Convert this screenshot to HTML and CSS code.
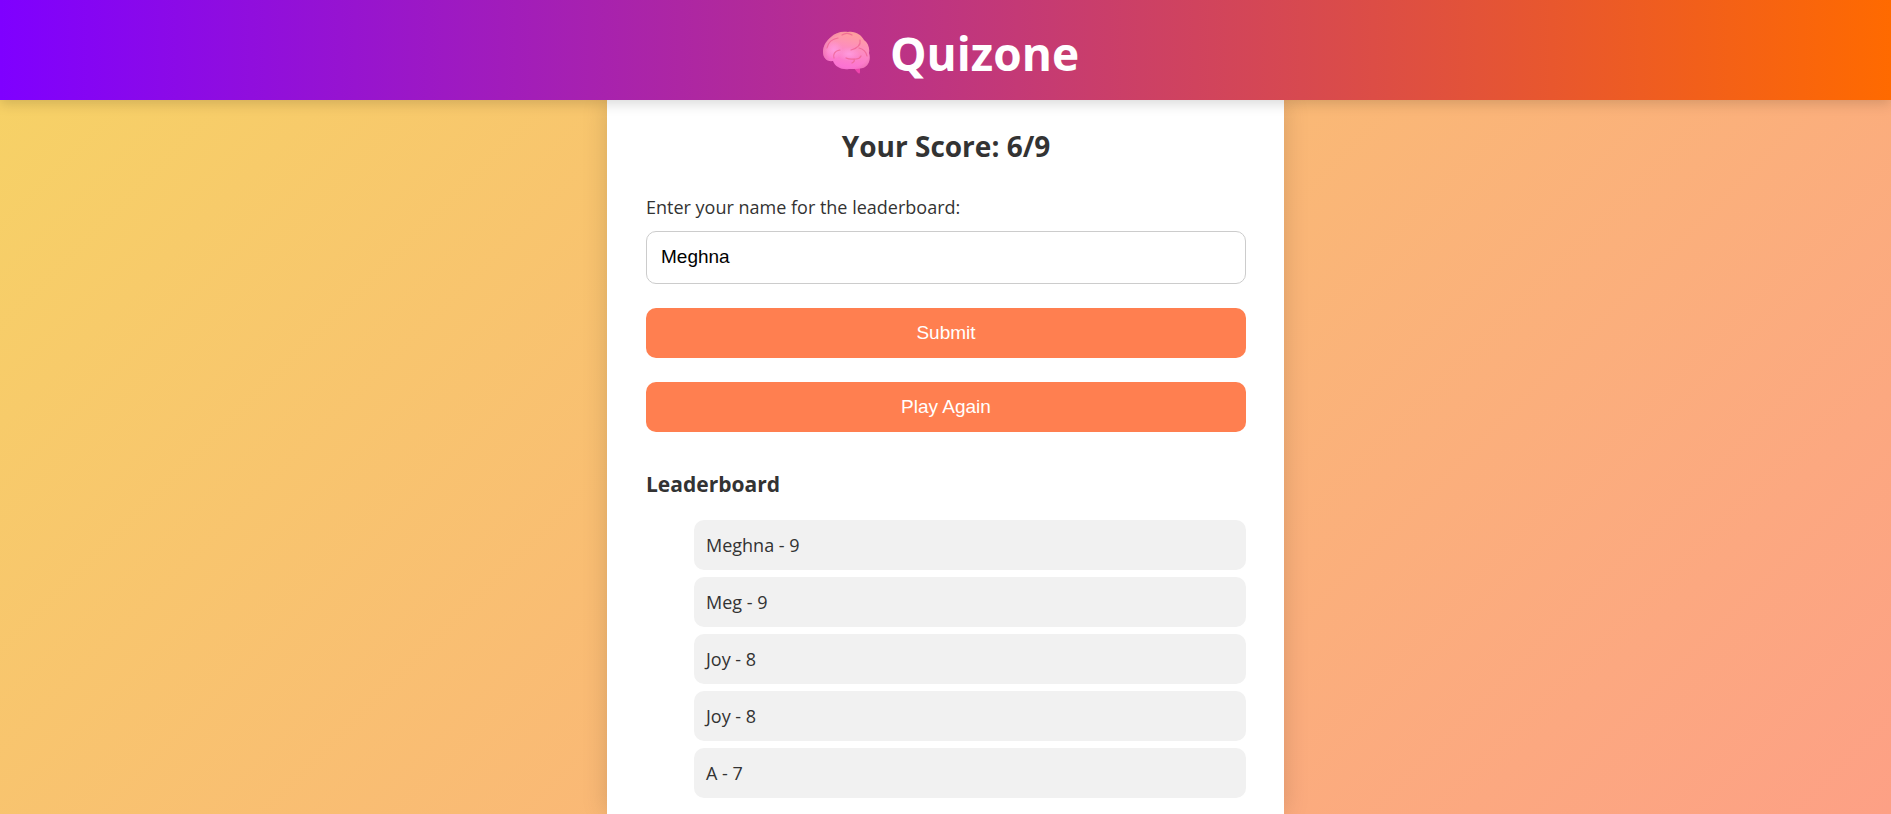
FILE: index.html
```html
<!DOCTYPE html>
<html lang="en">
<head>
<meta charset="utf-8">
<meta name="viewport" content="width=device-width, initial-scale=1">
<title>Quizone</title>
<link rel="stylesheet" href="styles.css">
</head>
<body>
<header class="header">
  <svg class="logo" viewBox="0 0 48 44" aria-hidden="true">
    <defs>
      <linearGradient id="brain" x1="0.65" y1="0" x2="0.4" y2="1">
        <stop offset="0" stop-color="#ffa19a"/>
        <stop offset="0.45" stop-color="#fd8cc0"/>
        <stop offset="1" stop-color="#fb6ed6"/>
      </linearGradient>
      <radialGradient id="shade" cx="0.55" cy="0.5" r="0.6">
        <stop offset="0.75" stop-color="#e0709c" stop-opacity="0"/>
        <stop offset="1" stop-color="#d9668f" stop-opacity="0.5"/>
      </radialGradient>
      <radialGradient id="glow">
        <stop offset="0" stop-color="#ffa0e4" stop-opacity="0.8"/>
        <stop offset="1" stop-color="#ffa0e4" stop-opacity="0"/>
      </radialGradient>
    </defs>
    <path d="M31 36 L35 41 Q38 44 38 41 L38 35 Z" fill="#ef45ad"/>
    <path d="M11 30 C5 31 1 27 1 21 C1 15 4 10 9 6 C13 2 19 0 26 1 C34 0 39 4 42 9 C46 12 48 17 47 22 C49 28 47 35 41 37 C37 38 31 38 27 38 C20 39 13 36 11 30 Z" fill="url(#brain)"/>
    <ellipse cx="12" cy="19" rx="9" ry="9" fill="url(#glow)"/>
    <ellipse cx="27" cy="23" rx="11" ry="7" fill="url(#glow)"/>
    <path d="M11 30 C5 31 1 27 1 21 C1 15 4 10 9 6 C13 2 19 0 26 1 C34 0 39 4 42 9 C46 12 48 17 47 22 C49 28 47 35 41 37 C37 38 31 38 27 38 C20 39 13 36 11 30 Z" fill="url(#shade)"/>
    <g fill="none" stroke="#ee6492" stroke-width="1.2" stroke-linecap="round" stroke-linejoin="round" stroke-opacity="0.8">
      <path d="M5 17 C6 12 10 8 16 7"/>
      <path d="M20 4 C23 2 27 2 30 4"/>
      <path d="M38 9 C39 14 36 17 29 19"/>
      <path d="M37 17 C41 18 44 20 45 25"/>
      <path d="M18 19 C12 20 11 24 12 27"/>
      <path d="M24 27 C28 29 31 28 34 28 C37 28 38 27 39 25 M32 28 C33 30 32 31 30 32"/>
    </g>
  </svg>
  <h1 class="brand">Quizone</h1>
</header>
<main class="card">
  <h2 class="score">Your Score: 6/9</h2>
  <form class="form">
    <label class="label" for="name">Enter your name for the leaderboard:</label>
    <input class="input" id="name" type="text" value="Meghna">
    <button class="button" type="button">Submit</button>
    <button class="button" type="button">Play Again</button>
  </form>
  <h3 class="subtitle">Leaderboard</h3>
  <ul class="list">
    <li class="entry">Meghna - 9</li>
    <li class="entry">Meg - 9</li>
    <li class="entry">Joy - 8</li>
    <li class="entry">Joy - 8</li>
    <li class="entry">A - 7</li>
  </ul>
</main>
</body>
</html>
```
FILE: styles.css
```css
* {
  box-sizing: border-box;
}

body {
  margin: 0;
  min-height: 100vh;
  display: flex;
  flex-direction: column;
  align-items: center;
  background: linear-gradient(135deg, #f6d365, #fda085);
  color: #333;
  font-family: "Segoe UI", "Open Sans", sans-serif;
  font-size: 18px;
  font-weight: 400;
  line-height: 26px;
}

.header {
  position: relative;
  width: 100%;
  padding: 21px 18px 15px 28px;
  display: flex;
  justify-content: center;
  align-items: center;
  gap: 20px;
  background: linear-gradient(90deg, #7f00ff, #ff6a00);
  box-shadow: 0 4px 12px rgba(0, 0, 0, 0.15);
}

.logo {
  width: 48px;
  height: 44px;
}

.brand {
  margin: 0;
  color: #fff;
  font-size: 46px;
  font-weight: 700;
  line-height: 64px;
}

.card {
  flex: 1;
  width: 100%;
  max-width: 677px;
  padding: 27px 38px 15px 39px;
  background: #fff;
  box-shadow: 0 0 24px rgba(0, 0, 0, 0.15);
}

.score {
  margin: 0 0 29px;
  font-size: 28px;
  font-weight: 700;
  line-height: 38px;
  text-align: center;
}

.form {
  display: flex;
  flex-direction: column;
}

.label {
  margin-bottom: 11px;
}

.input {
  height: 53px;
  margin-bottom: 24px;
  padding: 0 14px 2px;
  border: 1px solid #ccc;
  border-radius: 10px;
  background: #fff;
  color: #000;
  font: 19px "Liberation Sans", Arial, sans-serif;
}

.button {
  height: 50px;
  margin-bottom: 24px;
  border: 0;
  border-radius: 10px;
  background: #ff7f50;
  color: #fff;
  font: 19px "Liberation Sans", Arial, sans-serif;
  cursor: pointer;
}

.subtitle {
  margin: 13px 0 21px;
  font-size: 21px;
  font-weight: 700;
  line-height: 30px;
}

.list {
  display: grid;
  gap: 7px;
  margin: 0;
  padding-left: 48px;
  list-style: none;
}

.entry {
  padding: 12px;
  border-radius: 10px;
  background: #f1f1f1;
}
```
